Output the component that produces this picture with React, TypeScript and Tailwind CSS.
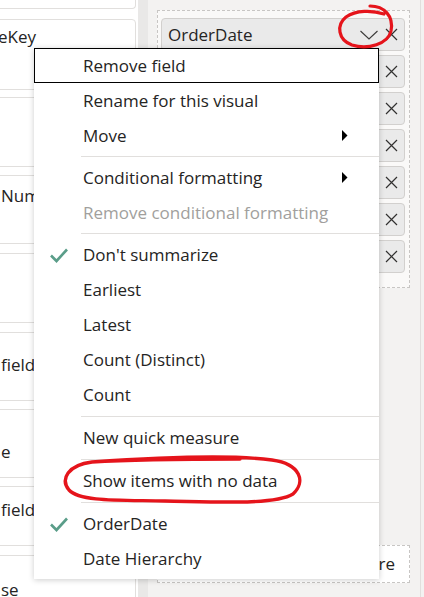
import React from "react";

const Chevron = () => (
  <svg width="18" height="10" viewBox="0 0 18 10" className="shrink-0">
    <path d="M0.5 1 L9 9 L17.5 1" fill="none" stroke="#3b3a39" strokeWidth="1.1" />
  </svg>
);

const XIcon = () => (
  <svg width="13" height="13" viewBox="0 0 13 13" className="shrink-0">
    <path d="M1 1 L12 12 M12 1 L1 12" fill="none" stroke="#323130" strokeWidth="1.2" />
  </svg>
);

const Check = () => (
  <svg width="20" height="16" viewBox="0 0 20 16">
    <path d="M2 8.5 L7.5 14 L18 2.5" fill="none" stroke="#5a9d89" strokeWidth="2.6" />
  </svg>
);

const Arrow = () => (
  <svg width="6" height="11" viewBox="0 0 6 11">
    <path d="M0 0 L5.5 5.5 L0 11 Z" fill="#000" />
  </svg>
);

type Item = {
  label: string;
  check?: boolean;
  sub?: boolean;
  disabled?: boolean;
  focus?: boolean;
};

const groups: Item[][] = [
  [
    { label: "Remove field", focus: true },
    { label: "Rename for this visual" },
    { label: "Move", sub: true },
  ],
  [
    { label: "Conditional formatting", sub: true },
    { label: "Remove conditional formatting", disabled: true },
  ],
  [
    { label: "Don't summarize", check: true },
    { label: "Earliest" },
    { label: "Latest" },
    { label: "Count (Distinct)" },
    { label: "Count" },
  ],
  [{ label: "New quick measure" }],
  [{ label: "Show items with no data" }],
  [{ label: "OrderDate", check: true }, { label: "Date Hierarchy" }],
];

const pills = ["OrderDate", "Product", "Category", "Region", "SalesAmount", "Quantity", "Customer"];

function MenuItem({ item }: { item: Item }) {
  return (
    <div
      className={
        "relative h-[35px] flex items-center " +
        (item.focus ? "border border-black pl-[48px]" : "pl-[49px]")
      }
    >
      {item.check && (
        <div className="absolute left-[15px] top-[10px]">
          <Check />
        </div>
      )}
      <span className={item.disabled ? "text-[#a19f9d]" : "text-[#252423]"}>{item.label}</span>
      {item.sub && (
        <div className="absolute left-[308px] top-[12px]">
          <Arrow />
        </div>
      )}
    </div>
  );
}

export default function App() {
  return (
    <div className="relative w-[424px] h-[597px] overflow-hidden flex bg-white font-['Open_Sans',sans-serif] text-[17px] leading-[24px] text-[#252423]">
      {/* Left field list */}
      <div className="w-[138px] shrink-0 bg-white flex flex-col">
        <div className="ml-[-10px] w-[146px] h-[9px] border-b border-r border-[#e1dfdd] rounded-br-[4px] shrink-0" />
        <div className="mt-[10px] ml-[-10px] w-[146px] h-[71px] border border-[#e1dfdd] rounded-r-[4px] shrink-0 pt-[5px]">
          <div className="w-[45px] flex justify-end whitespace-nowrap">OrderDateKey</div>
        </div>
        <div className="mt-[7px] ml-[-10px] w-[146px] h-[70px] border border-[#e1dfdd] rounded-r-[4px] shrink-0" />
        <div className="mt-[8px] ml-[-10px] w-[146px] h-[69px] border border-[#e1dfdd] rounded-r-[4px] shrink-0 pt-[8px] pl-[10px] whitespace-nowrap">
          Number
        </div>
        <div className="mt-[9px] ml-[-10px] w-[146px] h-[70px] border border-[#e1dfdd] rounded-r-[4px] shrink-0" />
        <div className="mt-[9px] ml-[-10px] w-[146px] h-[69px] border border-[#e1dfdd] rounded-r-[4px] shrink-0 pt-[20px] pl-[10px] whitespace-nowrap">
          fields here
        </div>
        <div className="mt-[8px] ml-[-10px] w-[146px] h-[69px] border border-[#e1dfdd] rounded-r-[4px] shrink-0 pt-[30px] pl-[10px] whitespace-nowrap">
          e
        </div>
        <div className="mt-[8px] ml-[-10px] w-[146px] h-[60px] border border-[#e1dfdd] rounded-r-[4px] shrink-0 pt-[11px] pl-[10px] whitespace-nowrap">
          fields here
        </div>
        <div className="mt-[9px] ml-[-10px] w-[146px] h-[60px] border border-[#e1dfdd] rounded-r-[4px] shrink-0 pt-[22px] pl-[10px] whitespace-nowrap">
          se
        </div>
      </div>

      {/* divider strip */}
      <div className="w-[10px] shrink-0 bg-[#e9e8e7]" />

      {/* Right visual wells panel */}
      <div className="w-[272px] shrink-0 bg-[#f3f2f1] flex flex-col pl-[9px] pt-[10px]">
        <div className="w-[253px] h-[278px] border border-dashed border-[#c8c6c4] bg-[#faf9f8] pt-[7px] pl-[3px] flex flex-col gap-[4px]">
          {pills.map((p, i) => (
            <div
              key={p}
              className="h-[33px] w-[244px] shrink-0 rounded-[4px] border border-[#d2d0ce] bg-[#eaeaea] flex items-center pl-[6px] pr-[6px]"
            >
              <span className="whitespace-nowrap">{p}</span>
              <div className="ml-auto flex items-center gap-[9px]">
                {i === 0 && (
                  <div className="mr-[-2px]">
                    <Chevron />
                  </div>
                )}
                <XIcon />
              </div>
            </div>
          ))}
        </div>
        <div className="mt-[257px] w-[253px] h-[38px] border border-dashed border-[#c8c6c4] bg-white flex items-center justify-end pr-[14px] whitespace-nowrap">
          Add drill-through fields here
        </div>
      </div>
      <div className="w-px shrink-0 bg-[#e1dfdd]" />
      <div className="flex-1 bg-[#f3f2f1]" />

      {/* Context menu */}
      <div className="absolute left-[34px] top-[48px] w-[345px] bg-white shadow-[0_1px_6px_rgba(0,0,0,0.2)] pb-[3px]">
        {groups.map((g, gi) => (
          <div key={gi}>
            {gi > 0 && (
              <div className={(gi >= 3 ? "h-[8px]" : "h-[7px]") + " flex items-center pl-[47px]"}>
                <div className="h-px w-full bg-[#e1dfdd]" />
              </div>
            )}
            {g.map((it) => (
              <MenuItem key={it.label} item={it} />
            ))}
          </div>
        ))}
      </div>

      {/* Red annotations */}
      <svg className="absolute left-0 top-0 pointer-events-none" width="424" height="597" viewBox="0 0 424 597">
        <path
          d="M370 6 C384 6 394 16 391 31 C388 44 368 50 352 45 C338 40 336 25 346 17 C356 10 372 10 384 14"
          fill="none"
          stroke="#e5141b"
          strokeWidth="3.2"
          strokeLinecap="round"
        />
        <path
          d="M92 462 C150 458 228 454 272 460 C301 464 306 482 293 494 C275 505 220 502 165 501 C120 500 80 502 69 490 C60 479 68 465 92 462 C140 459 200 459 240 459"
          fill="none"
          stroke="#e5141b"
          strokeWidth="3.4"
          strokeLinecap="round"
        />
      </svg>
    </div>
  );
}
